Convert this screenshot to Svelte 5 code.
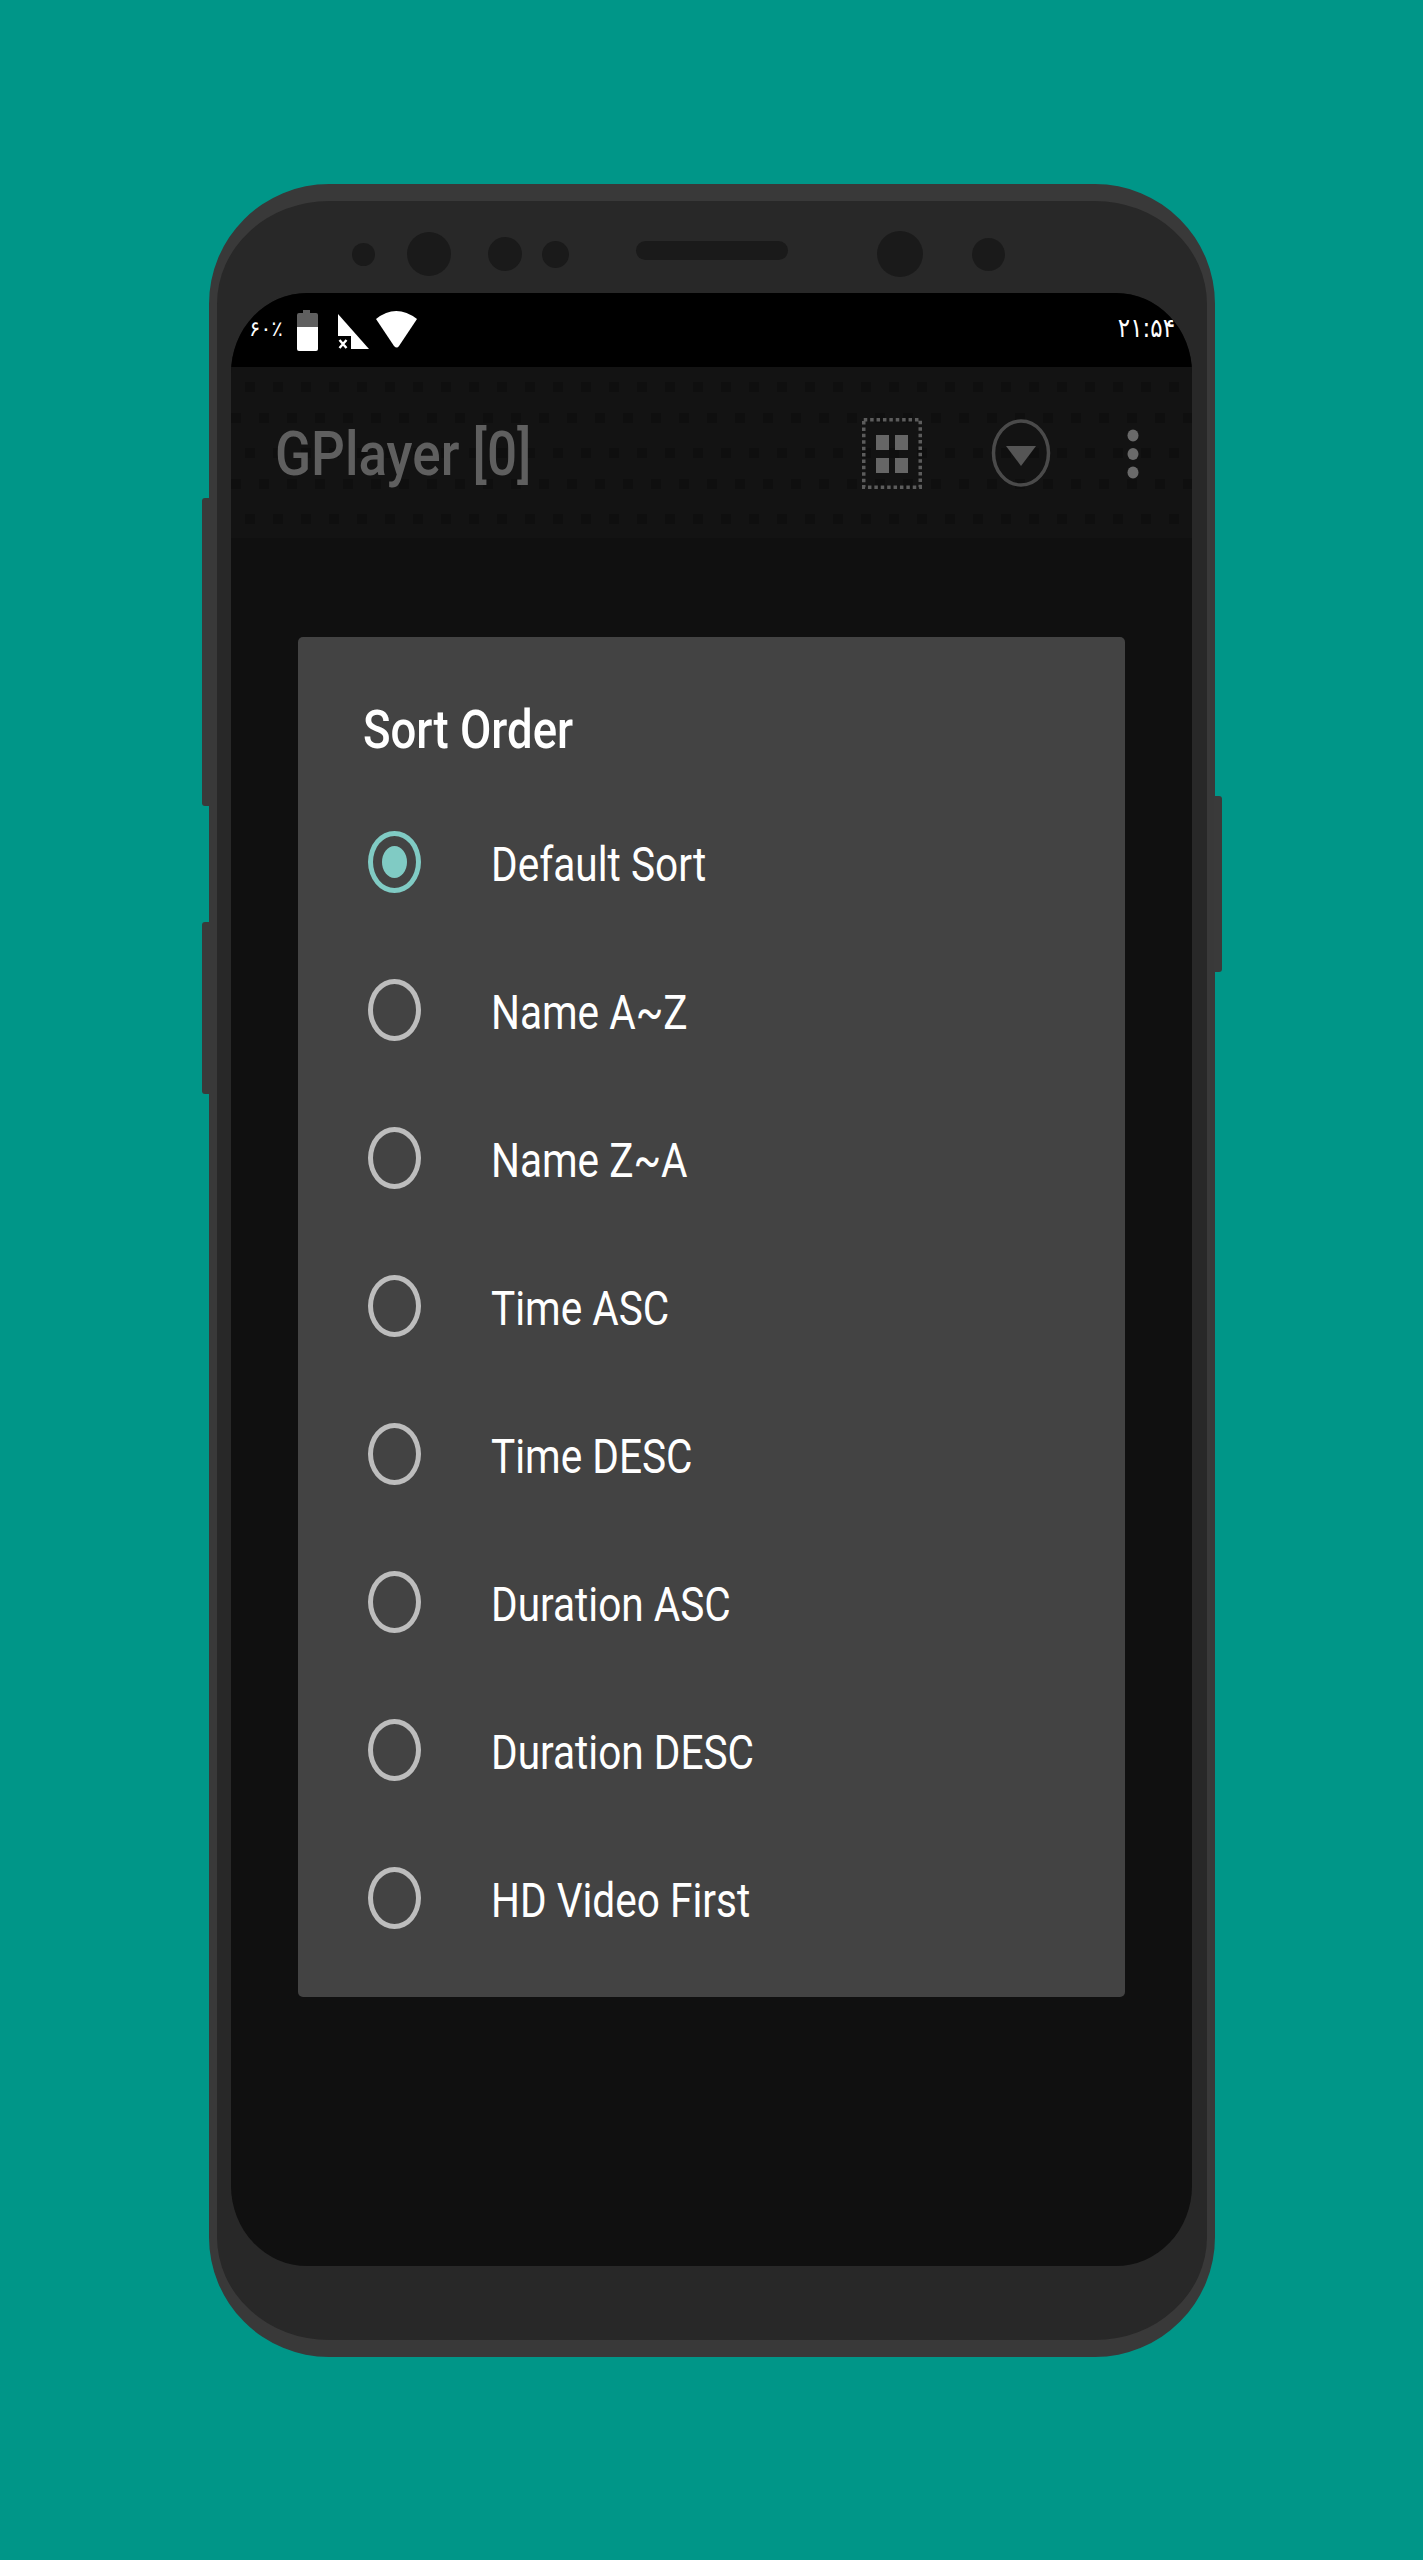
<script>
    const SORT_OPTIONS = [
        'Default Sort',
        'Name A~Z',
        'Name Z~A',
        'Time ASC',
        'Time DESC',
        'Duration ASC',
        'Duration DESC',
        'HD Video First',
    ];
    let selected = $state(0);
</script>

<main class="page">
    <div class="phone">
        <span class="side-btn left-a"></span>
        <span class="side-btn left-b"></span>
        <span class="side-btn right-a"></span>

        <div class="bezel-top">
            <span class="sensor s1"></span>
            <span class="sensor s2"></span>
            <span class="sensor s3"></span>
            <span class="sensor s4"></span>
            <span class="speaker"></span>
            <span class="sensor s5"></span>
            <span class="sensor s6"></span>
        </div>

        <div class="screen">
            <div class="status-bar">
                <span class="percent">۶۰٪</span>
                <svg class="status-icons" width="122" height="42" viewBox="0 0 122 42" aria-hidden="true">
                    <!-- battery -->
                    <path d="M1 5a2 2 0 0 1 2-2h4V0h7v3h6a2 2 0 0 1 2 2v13H1z" fill="#5f5f5f" />
                    <path d="M1 17h21v22a2 2 0 0 1-2 2H3a2 2 0 0 1-2-2z" fill="#fff" />
                    <!-- signal, no sim -->
                    <path d="M42 4l31 35H42z" fill="#fff" />
                    <rect x="42" y="26" width="13" height="14" fill="#000" />
                    <path d="M43.5 30l7 8M50.5 30l-7 8" stroke="#fff" stroke-width="2.4" fill="none" />
                    <!-- wifi -->
                    <path d="M80 9Q100-7 121 9L103 36Q101 39 98 36z" fill="#fff" />
                </svg>
                <span class="clock">۲۱:۵۴</span>
            </div>

            <div class="app-bar">
                <svg class="dots-bg" width="100%" height="100%" aria-hidden="true">
                    <defs>
                        <pattern id="appbar-dots" width="28" height="66" patternUnits="userSpaceOnUse">
                            <rect x="14" y="15" width="10" height="10" fill="#0f0f0f" />
                            <rect x="0" y="46" width="10" height="10" fill="#0f0f0f" />
                        </pattern>
                    </defs>
                    <rect width="100%" height="100%" fill="url(#appbar-dots)" />
                </svg>
                <span class="app-title">GPlayer [0]</span>
                <svg class="icon-grid" width="60" height="71" viewBox="0 0 60 71" aria-hidden="true">
                    <rect x="1.75" y="1.75" width="56.5" height="67.5" fill="none" stroke="#5c5c5c" stroke-width="3.5" stroke-dasharray="3.5 2.9" />
                    <rect x="14" y="17" width="13" height="15" fill="#666" />
                    <rect x="33" y="17" width="13" height="15" fill="#666" />
                    <rect x="14" y="40" width="13" height="15" fill="#666" />
                    <rect x="33" y="40" width="13" height="15" fill="#666" />
                </svg>
                <svg class="icon-sort" width="60" height="70" viewBox="0 0 60 70" aria-hidden="true">
                    <ellipse cx="30" cy="35" rx="27.5" ry="32" fill="none" stroke="#4a4a4a" stroke-width="3.5" />
                    <path d="M15 28h30L30 48z" fill="#555" />
                </svg>
                <svg class="icon-more" width="12" height="50" viewBox="0 0 12 50" aria-hidden="true">
                    <ellipse cx="6" cy="6.5" rx="5.5" ry="6" fill="#6a6a6a" />
                    <ellipse cx="6" cy="25" rx="5.5" ry="6" fill="#6a6a6a" />
                    <ellipse cx="6" cy="43.5" rx="5.5" ry="6" fill="#6a6a6a" />
                </svg>
            </div>

            <div class="content">
                <section class="dialog">
                    <h2><span>Sort Order</span></h2>
                    {#each SORT_OPTIONS as option, i}
                        <button class="row" onclick={() => (selected = i)}>
                            <span class="radio" class:on={selected === i}></span>
                            <span class="label">{option}</span>
                        </button>
                    {/each}
                </section>
            </div>
        </div>
    </div>
</main>

<style>
    :global(body) {
        margin: 0;
        background: #009688;
    }

    .page {
        height: 2560px;
        padding-top: 184px;
        box-sizing: border-box;
        display: flex;
        justify-content: center;
        background: #009688;
        font-family: Roboto, "Liberation Sans", sans-serif;
    }

    .phone {
        position: relative;
        width: 1006px;
        height: 2173px;
        box-sizing: border-box;
        margin-left: 1px;
        padding: 0 15px 0 14px;
        background: #282828;
        border: solid #393939;
        border-width: 17px 8px;
        border-radius: 120px;
        display: flex;
        flex-direction: column;
    }

    .side-btn {
        position: absolute;
        width: 8px;
        background: #3a3a3a;
    }
    .left-a { left: -15px; top: 297px; height: 308px; border-radius: 3px 0 0 3px; }
    .left-b { left: -15px; top: 721px; height: 172px; border-radius: 3px 0 0 3px; }
    .right-a { right: -15px; top: 595px; height: 176px; border-radius: 0 3px 3px 0; }

    .bezel-top {
        height: 92px;
        flex: none;
        display: flex;
        align-items: center;
        padding: 14px 0 0 121px;
        box-sizing: border-box;
    }

    .sensor, .speaker {
        background: #1a1a1a;
        border-radius: 50%;
        flex: none;
    }
    .s1 { width: 23px; height: 23px; margin-right: 32px; }
    .s2 { width: 44px; height: 44px; margin-right: 37px; }
    .s3 { width: 34px; height: 34px; margin-right: 20px; }
    .s4 { width: 27px; height: 27px; margin-right: 67px; }
    .speaker { width: 152px; height: 19px; border-radius: 10px; margin: 0 89px 8px 0; }
    .s5 { width: 46px; height: 46px; margin-right: 49px; }
    .s6 { width: 33px; height: 33px; }

    .screen {
        height: 1973px;
        flex: none;
        overflow: hidden;
        border-radius: 76px / 80px;
        background: #101010;
        display: flex;
        flex-direction: column;
    }

    .status-bar {
        height: 74px;
        flex: none;
        background: #000;
        display: flex;
        align-items: flex-start;
        color: #fff;
        font-family: "DejaVu Sans", sans-serif;
    }

    .percent {
        font-size: 21px;
        margin: 24px 0 0 18px;
        width: 47px;
        line-height: 24px;
        white-space: nowrap;
    }

    .status-icons {
        margin-top: 17px;
    }

    .clock {
        margin: 21px 17px 0 auto;
        font-size: 23px;
        line-height: 28px;
        transform: scaleY(1.15);
    }

    .app-bar {
        position: relative;
        height: 171px;
        flex: none;
        display: flex;
        align-items: flex-start;
        background: #131313;
    }

    .dots-bg {
        position: absolute;
        inset: 0;
    }

    .app-title {
        position: relative;
        margin: 55px 0 0 44px;
        font-size: 53px;
        line-height: 64px;
        font-weight: 500;
        color: #5f5f5f;
        transform: scaleY(1.17);
    }

    .icon-grid, .icon-sort, .icon-more {
        position: relative;
        flex: none;
    }
    .icon-grid { margin: 51px 0 0 auto; }
    .icon-sort { margin: 51px 0 0 69px; }
    .icon-more { margin: 62px 53px 0 76px; }

    .content {
        flex: 1;
        padding: 99px 67px 0;
    }

    .dialog {
        background: #434343;
        border-radius: 5px;
        height: 1360px;
        padding: 0 0 27px;
        box-sizing: border-box;
        display: flex;
        flex-direction: column;
    }

    h2 {
        margin: 0;
        height: 151px;
        flex: none;
        padding: 63px 0 0 65px;
        box-sizing: border-box;
        font-size: 45.5px;
        line-height: 60px;
        font-weight: 500;
        color: #fff;
    }
    h2 span {
        display: inline-block;
        transform: scaleY(1.17);
    }

    .row {
        all: unset;
        height: 148px;
        flex: none;
        display: flex;
        align-items: center;
        padding-left: 70px;
        box-sizing: border-box;
        cursor: pointer;
    }

    .radio {
        position: relative;
        width: 53px;
        height: 62px;
        box-sizing: border-box;
        border: 5.5px solid #bdbdbd;
        border-radius: 50%;
        margin-right: 70px;
        flex: none;
    }
    .radio.on {
        border-color: #80cbc4;
    }
    .radio.on::after {
        content: "";
        position: absolute;
        inset: 10px 9px;
        border-radius: 50%;
        background: #80cbc4;
    }

    .label {
        display: inline-block;
        font-size: 40.6px;
        line-height: 60px;
        color: #fff;
        transform: translateY(3px) scaleY(1.17);
    }
</style>
